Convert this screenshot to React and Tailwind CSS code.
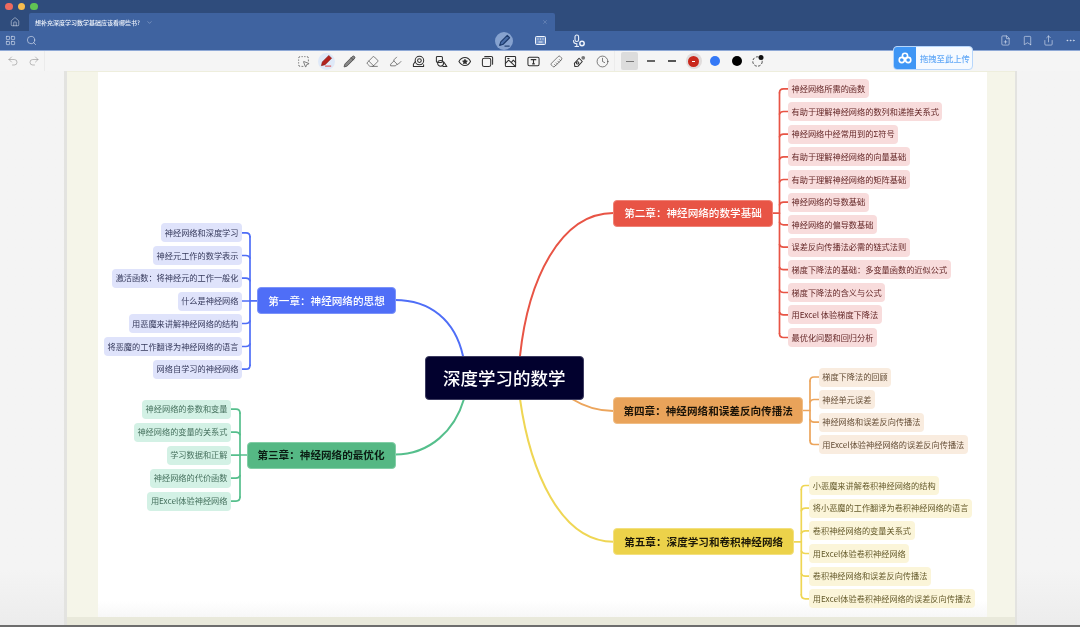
import React from "react";
import { LayoutGrid, Search, Home, FilePlus, Bookmark, Share, Ellipsis, Undo2, Redo2, SquareDashedMousePointer, Pencil, Eraser, Highlighter, Ruler, Clock, ChevronDown, X } from "lucide-react";

const OX = 98, OY = 72;
const THEMES = {
  blue: { line: "#4f6ef7", leaf: "bg-[#dfe3fb] text-[#363a5c]", ch: "bg-[#4f6ef7] text-white border-[#7c93f9] font-medium" },
  red: { line: "#e85445", leaf: "bg-[#f8dcdc] text-[#632626]", ch: "bg-[#e85445] text-white border-[#ef8377] font-medium" },
  orange: { line: "#eca55c", leaf: "bg-[#f9ecdf] text-[#654e37]", ch: "bg-[#e9a35a] text-[#1c1408] border-[#f0bd85] font-bold" },
  yellow: { line: "#efd654", leaf: "bg-[#fbf5d9] text-[#655b2c]", ch: "bg-[#ecd24a] text-[#1c1808] border-[#f3e07f] font-bold" },
  green: { line: "#55bf8c", leaf: "bg-[#d3f1e5] text-[#47725f]", ch: "bg-[#55b884] text-[#0b1c13] border-[#82cea6] font-bold" },
};

const BRANCHES = [
  { t: "blue", side: "l", title: "第一章：神经网络的思想", x: 257.3, y: 287.3, w: 138.4, edge: 242, bx: 250,
    leaves: [["神经网络和深度学习", 223.3], ["神经元工作的数学表示", 246], ["激活函数：将神经元的工作一般化", 268.7], ["什么是神经网络", 291.5], ["用恶魔来讲解神经网络的结构", 314], ["将恶魔的工作翻译为神经网络的语言", 337], ["网络自学习的神经网络", 359.7]] },
  { t: "green", side: "l", title: "第三章：神经网络的最优化", x: 246.5, y: 441.5, w: 149, edge: 231, bx: 240,
    leaves: [["神经网络的参数和变量", 399.6], ["神经网络的变量的关系式", 422.6], ["学习数据和正解", 445.6], ["神经网络的代价函数", 468.6], ["用Excel体验神经网络", 491.6]] },
  { t: "red", side: "r", title: "第二章：神经网络的数学基础", x: 613.3, y: 199.7, w: 159.4, edge: 788, bx: 779.5,
    leaves: [["神经网络所需的函数", 79.3], ["有助于理解神经网络的数列和递推关系式", 102], ["神经网络中经常用到的Σ符号", 124.7], ["有助于理解神经网络的向量基础", 147.3], ["有助于理解神经网络的矩阵基础", 170], ["神经网络的导数基础", 192.7], ["神经网络的偏导数基础", 215.3], ["误差反向传播法必需的链式法则", 237.6], ["梯度下降法的基础：多变量函数的近似公式", 260.2], ["梯度下降法的含义与公式", 283], ["用Excel 体验梯度下降法", 305.4], ["最优化问题和回归分析", 328]] },
  { t: "orange", side: "r", title: "第四章：神经网络和误差反向传播法", x: 613.3, y: 397, w: 189.7, edge: 818.7, bx: 810,
    leaves: [["梯度下降法的回顾", 367.5], ["神经单元误差", 390], ["神经网络和误差反向传播法", 412.6], ["用Excel体验神经网络的误差反向传播法", 435]] },
  { t: "yellow", side: "r", title: "第五章：深度学习和卷积神经网络", x: 613.3, y: 528.3, w: 180.7, edge: 809.3, bx: 801.3,
    leaves: [["小恶魔来讲解卷积神经网络的结构", 476], ["将小恶魔的工作翻译为卷积神经网络的语言", 498.7], ["卷积神经网络的变量关系式", 521.3], ["用Excel体验卷积神经网络", 544], ["卷积神经网络和误差反向传播法", 566.7], ["用Excel体验卷积神经网络的误差反向传播法", 589.3]] },
];

const LEAF_H = 19;

function Connectors() {
  const roots = [
    ["blue", "M395 300 C430 300 455 320 463 356"],
    ["red", "M520 356 C528 280 560 213 613.5 213"],
    ["orange", "M572 399 C585 407 597 411 613.5 411"],
    ["yellow", "M520 399 C530 470 560 541.7 613.5 541.7"],
    ["green", "M464 399 C455 430 430 454.5 395 454.5"],
  ];
  return (
    <svg className="absolute inset-0 w-full h-full" viewBox={`${OX} ${OY} 889 545`} fill="none" strokeWidth="1.7" strokeLinecap="round">
      {roots.map(([t, d]) => <path key={t} d={d} stroke={THEMES[t].line} strokeWidth="2" />)}
      {BRANCHES.map((b) => {
        const ys = b.leaves.map((l) => l[1] + LEAF_H / 2);
        const top = ys[0], bot = ys[ys.length - 1];
        const cy = b.y + 13.5;
        const chEdge = b.side === "l" ? b.x : b.x + b.w;
        const s = b.side === "l" ? 1 : -1;
        return (
          <g key={b.t} stroke={THEMES[b.t].line}>
            <path d={`M${b.bx} ${top + 4} V${bot - 4}`} />
            <path d={`M${chEdge} ${cy} H${b.bx}`} />
            {ys.map((y, i) => {
              const d = i === 0 || i === ys.length - 1
                ? `M${b.edge} ${y} H${b.bx - 4 * s} Q${b.bx} ${y} ${b.bx} ${y + (i === 0 ? 4 : -4)}`
                : Math.abs(y - cy) < 3
                  ? `M${b.edge} ${y} H${b.bx}`
                  : `M${b.edge} ${y} H${b.bx - 4 * s} Q${b.bx - 1 * s} ${y} ${b.bx} ${y + (y < cy ? 2.5 : -2.5)}`;
              return <path key={i} d={d} />;
            })}
          </g>
        );
      })}
    </svg>
  );
}

function MindMap() {
  return (
    <div className="relative flex-1 bg-gradient-to-b from-white from-[97%] to-[#f7f7f7] font-['Noto_Sans_CJK_SC','Noto_Sans',sans-serif]">
      <Connectors />
      <div className="absolute left-[327px] top-[284px] w-[158.7px] h-[43.6px] rounded-[4px] bg-[#02012e] border border-[#3d3c60] text-white text-[17.5px] flex items-center justify-center font-medium whitespace-nowrap">
        深度学习的数学
      </div>
      {BRANCHES.map((b) => {
        const theme = THEMES[b.t];
        return (
          <React.Fragment key={b.t}>
            <div
              className={`absolute h-[27px] rounded-[4px] border flex items-center justify-center text-[10.6px] whitespace-nowrap ${theme.ch}`}
              style={{ left: b.x - OX, top: b.y - OY, width: b.w }}
            >
              {b.title}
            </div>
            {b.leaves.map(([text, y]) => (
              <div
                key={text}
                className={`absolute h-[19px] px-[3.5px] pb-[1.5px] rounded-[4px] flex items-center text-[8.2px] whitespace-nowrap ${theme.leaf}`}
                style={b.side === "l" ? { right: 889 - (b.edge - OX), top: y - OY } : { left: b.edge - OX, top: y - OY }}
              >
                {text}
              </div>
            ))}
          </React.Fragment>
        );
      })}
    </div>
  );
}

const S = "#2e2e2e";
const Ico = ({ children }) => (
  <svg width="13" height="13" viewBox="0 0 14 14" fill="none" stroke={S} strokeWidth="1.1" strokeLinecap="round" strokeLinejoin="round">{children}</svg>
);
const Stamp = () => <Ico><circle cx="8" cy="6" r="4.6" /><circle cx="8" cy="6" r="2" /><path d="M3.6 7 1.5 10v2.4h11V10.5" /></Ico>;
const ShapesI = () => <Ico><rect x="1.5" y="1.5" width="6.5" height="6.5" rx="1.2" /><circle cx="6" cy="9" r="3.2" /><path d="M9.5 7.5 12.8 12.5H8.5" /></Ico>;
const EyeStar = () => <Ico><path d="M1 7C3 3.5 5 2.8 7.5 2.8S12 4 13.5 7C12 10 10 11.2 7.5 11.2S3 10.5 1 7Z" /><path d="M7.5 4.8 8.2 6.3 9.8 6.5 8.6 7.6 8.9 9.2 7.5 8.4 6.1 9.2 6.4 7.6 5.2 6.5 6.8 6.3Z" fill={S} /></Ico>;
const Sticky = () => <Ico><rect x="1.5" y="3.5" width="9" height="9" rx="2" /><path d="M4 1.5H11A1.5 1.5 0 0 1 12.5 3V10" /></Ico>;
const ImageI = () => <Ico><rect x="1.5" y="1.5" width="11" height="11" rx="1" /><path d="M1.5 9 5 5.5 12.5 12.5M8 8 10 5.5 12.5 8" /><path d="M4 3.8H5.5" /></Ico>;
const TextBox = () => <Ico><rect x="1" y="2.5" width="12" height="9" rx="1.5" /><path d="M4.5 5H9.5M7 5V9.5M6 9.5H8" strokeWidth="1.2" /></Ico>;
const Dropper = () => (
  <Ico>
    <path d="M6.5 3.5 10 7 5.5 12 2 12.5 1.5 9Z" />
    <circle cx="5" cy="8.5" r="1.3" />
    <circle cx="11" cy="3" r="2" fill="#777" stroke="none" />
  </Ico>
);
const RedPen = () => (
  <span className="w-[17px] h-[17px] rounded-full bg-[#dfe9f8] flex items-center justify-center">
    <svg width="13" height="14" viewBox="0 0 14 15">
      <path d="M9.5 1.5 12.5 4.5 5.5 11.5 1.5 12.5 2.5 8.5Z" fill="#b3221e" stroke="#7d1512" strokeWidth=".6" />
      <path d="M5.5 13H12" stroke="#d33" strokeWidth="1" />
    </svg>
  </span>
);
const BluePen = () => (
  <svg width="13" height="14" viewBox="0 0 14 15" fill="none">
    <path d="M10 1.5 12.5 4 5.5 11 1.8 12.2 3 8.5Z" stroke="#1c3a6c" strokeWidth="1.2" strokeLinejoin="round" fill="#4a6ea8" />
    <path d="M7 13H12.5" stroke="#1c3a6c" strokeWidth="1.2" />
  </svg>
);
const MicGear = () => (
  <svg width="14" height="14" viewBox="0 0 14 14" fill="none" stroke="#eef3fb" strokeWidth="1.1" strokeLinecap="round">
    <rect x="3" y="1" width="3.6" height="6.5" rx="1.8" />
    <path d="M1.5 6.5A3.3 3.3 0 0 0 4.8 9.8V12.5M3 12.5H6.5" />
    <circle cx="10" cy="9.5" r="2.2" strokeWidth="1.5" />
  </svg>
);
const Keys = () => (
  <svg width="11" height="9" viewBox="0 0 11 9" fill="#6f8fc4" stroke="#f2f6fc" strokeWidth="1">
    <rect x=".5" y=".5" width="10" height="8" rx="1" />
    <path d="M2.5 3H3.5M5 3H6M7.5 3H8.5M3.5 6H7.5" strokeWidth=".9" />
  </svg>
);

const Tool = ({ children }) => <div className="w-[23px] h-full flex items-center justify-center shrink-0">{children}</div>;
const Opt = ({ children }) => <div className="w-[21.4px] h-full flex items-center justify-center shrink-0">{children}</div>;
const lc = "text-[#2e2e2e]";

function AnnotBar() {
  return (
    <div className="h-[20px] bg-[#f5f5f5] flex items-center shrink-0">
      <div className="w-[45px] h-full flex items-center pl-[2px] border-r border-[#ebebeb] shrink-0">
        <div className="w-[21px] flex justify-center"><Undo2 size={12} strokeWidth={1.1} className="text-[#888]" /></div>
        <div className="w-[21px] flex justify-center"><Redo2 size={12} strokeWidth={1.1} className="text-[#888]" /></div>
      </div>
      <div className="w-[247px] shrink-0" />
      <Tool><SquareDashedMousePointer size={13} strokeWidth={1.1} className={lc} /></Tool>
      <Tool><RedPen /></Tool>
      <Tool><Pencil size={13} strokeWidth={1.2} className={lc} fill="#888" /></Tool>
      <Tool><Eraser size={13} strokeWidth={1.1} className={lc} /></Tool>
      <Tool><Highlighter size={13} strokeWidth={1.1} className={lc} /></Tool>
      <Tool><Stamp /></Tool>
      <Tool><ShapesI /></Tool>
      <Tool><EyeStar /></Tool>
      <Tool><Sticky /></Tool>
      <Tool><ImageI /></Tool>
      <Tool><TextBox /></Tool>
      <Tool><Ruler size={13} strokeWidth={1.1} className={`${lc} rotate-90`} /></Tool>
      <Tool><Dropper /></Tool>
      <Tool><Clock size={13} strokeWidth={1.1} className={lc} /></Tool>
      <div className="w-[1px] h-full bg-[#ececec] mr-[4px] shrink-0" />
      <Opt><div className="w-[17px] h-[18px] rounded-[2px] bg-[#dcdcdc] flex items-center justify-center"><div className="w-[8px] h-px bg-[#777]" /></div></Opt>
      <Opt><div className="w-[8px] h-[1.5px] bg-[#666]" /></Opt>
      <Opt><div className="w-[8px] h-[2px] bg-[#555]" /></Opt>
      <Opt>
        <div className="w-[16px] h-[16px] rounded-full bg-[#e0dcdc] flex items-center justify-center">
          <div className="w-[11px] h-[11px] rounded-full bg-[#c9281c] flex items-center justify-center"><div className="w-[3px] h-px bg-white" /></div>
        </div>
      </Opt>
      <Opt><div className="w-[10px] h-[10px] rounded-full bg-[#3478f6]" /></Opt>
      <Opt><div className="w-[10px] h-[10px] rounded-full bg-black" /></Opt>
      <Opt>
        <svg width="14" height="14" viewBox="0 0 14 14" fill="none">
          <circle cx="6.5" cy="7.5" r="4.7" stroke="#444" strokeWidth="1" strokeDasharray="2.5 1.5" />
          <circle cx="10" cy="3.5" r="2.5" fill="#111" />
        </svg>
      </Opt>
    </div>
  );
}

function TopBar() {
  const w = "text-[#eef3fb]";
  return (
    <div className="h-[20px] bg-[#3f63a0] border-b border-[#8fa9d6] flex items-center shrink-0">
      <div className="w-[21px] flex justify-center shrink-0"><LayoutGrid size={11} strokeWidth={1.2} className={w} /></div>
      <div className="w-[21px] flex justify-center shrink-0"><Search size={11} strokeWidth={1.2} className={w} /></div>
      <div className="w-[453px] shrink-0" />
      <div className="w-[18px] h-[18px] rounded-full bg-[#86a2cf] flex items-center justify-center shrink-0">
        <BluePen />
      </div>
      <div className="w-[17px] shrink-0" />
      <div className="w-[20px] flex justify-center shrink-0"><Keys /></div>
      <div className="w-[19px] shrink-0" />
      <div className="w-[20px] flex justify-center shrink-0"><MicGear /></div>
      <div className="flex-1" />
      <div className="w-[21.5px] flex justify-center shrink-0"><FilePlus size={11} strokeWidth={1.2} className={w} /></div>
      <div className="w-[21.5px] flex justify-center shrink-0"><Bookmark size={11} strokeWidth={1.2} className={w} /></div>
      <div className="w-[21.5px] flex justify-center shrink-0"><Share size={11} strokeWidth={1.2} className={w} /></div>
      <div className="w-[21.5px] flex justify-center shrink-0 mr-[-1px]"><Ellipsis size={11} strokeWidth={1.2} className={w} /></div>
    </div>
  );
}

export default function App() {
  return (
    <div className="relative w-[1080px] h-[627px] overflow-hidden flex flex-col bg-[#f4f4f4] font-['Noto_Sans_CJK_SC','Noto_Sans',sans-serif] blur-[0.3px]">
      <div className="h-[13px] bg-[#2f4c7c] flex items-center gap-[5px] pl-[5px] shrink-0">
        <span className="w-[7.5px] h-[7.5px] rounded-full bg-[#ee6a5f]" />
        <span className="w-[7.5px] h-[7.5px] rounded-full bg-[#f5bd4f]" />
        <span className="w-[7.5px] h-[7.5px] rounded-full bg-[#61c454]" />
      </div>
      <div className="h-[18px] bg-[#2f4c7c] flex shrink-0">
        <div className="w-[29px] flex items-center justify-center shrink-0"><Home size={10} strokeWidth={1.2} className="text-[#eef3fb]" /></div>
        <div className="w-[526px] bg-[#3f63a0] rounded-t-[2px] flex items-center pl-[6px] pr-[7px] text-[#eef3fb] text-[6px] shrink-0 font-medium">
          <span className="whitespace-nowrap">想补充深度学习数学基础应该看哪些书?</span>
          <ChevronDown size={7} strokeWidth={1} className="ml-[6px]" />
          <span className="flex-1" />
          <X size={6} strokeWidth={1} className="text-[#c3d0e6]" />
        </div>
      </div>
      <TopBar />
      <AnnotBar />
      <div className="flex-1 flex min-h-0">
        <div className="w-[64px] shrink-0 bg-gradient-to-b from-[#f4f4f4] from-[90%] to-[#ececec]" />
        <div className="w-[2.5px] bg-[#e3e3e0] shrink-0" />
        <div className="flex-1 flex flex-col bg-[#f5f5e9] border-t border-[#eeeedd]">
          <div className="flex-1 flex pl-[31.5px] pr-[28px] min-h-0">
            <MindMap />
          </div>
          <div className="h-[8px] bg-[#e9e9db] shrink-0" />
        </div>
        <div className="w-[2px] bg-[#e3e3e0] shrink-0" />
        <div className="w-[63px] shrink-0 bg-gradient-to-b from-[#f4f4f4] from-[90%] to-[#ececec]" />
      </div>
      <div className="h-[2px] bg-[#6d6d6d] shrink-0" />
      <div className="absolute left-[893px] top-[46px] w-[80px] h-[24px] rounded-[4px] border border-[#b7d6fb] bg-[#f6faff] flex items-center overflow-hidden">
        <div className="w-[22px] h-full bg-[#3f96f5] flex items-center justify-center shrink-0">
          <svg width="14" height="12" viewBox="0 0 14 12" fill="none" stroke="white" strokeWidth="1.6">
            <circle cx="7" cy="3.8" r="2.6" /><circle cx="3.8" cy="8" r="2.6" /><circle cx="10.2" cy="8" r="2.6" />
          </svg>
        </div>
        <span className="ml-[4px] text-[8.3px] text-[#63a9f7] font-medium whitespace-nowrap">拖拽至此上传</span>
      </div>
    </div>
  );
}
